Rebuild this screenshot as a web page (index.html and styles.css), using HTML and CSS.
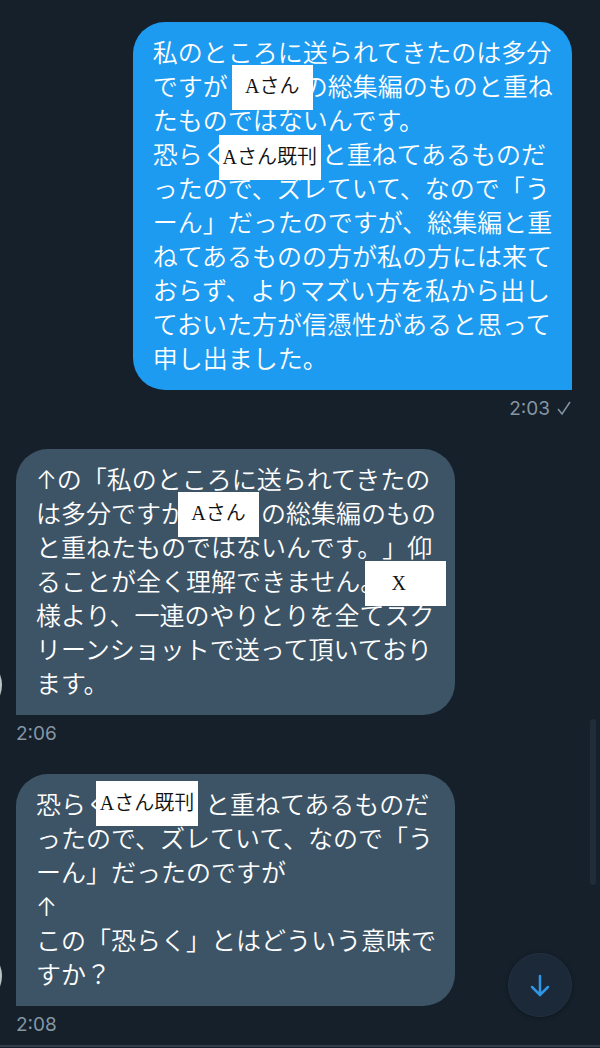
FILE: index.html
```
<!DOCTYPE html>
<html lang="ja">
<head>
    <meta charset="UTF-8">
    <meta name="viewport" content="width=device-width, initial-scale=1.0">
    <title>メッセージ</title>
    <link rel="stylesheet" href="styles.css">
</head>
<body>
    <main class="conversation">
        <div class="message outgoing">
            <p class="bubble">私のところに送られてきたのは多分ですが<span class="gap"><span class="label">Aさん</span></span>の総集編のものと重ねたものではないんです。<br>恐らく<span class="gap gap-long"><span class="label label-long">Aさん既刊</span></span>と重ねてあるものだったので、ズレていて、なので「うーん」だったのですが、総集編と重ねてあるものの方が私の方には来ておらず、よりマズい方を私から出しておいた方が信憑性があると思って申し出ました。</p>
            <div class="meta">
                <time>2:03</time>
                <svg class="check" viewBox="0 0 16 16" aria-hidden="true"><path d="M2 9l4 5L14 2"/></svg>
            </div>
        </div>

        <div class="message incoming">
            <span class="avatar"></span>
            <p class="bubble">↑の「私のところに送られてきたのは多分ですが<span class="gap"><span class="label label-left">Aさん</span></span>の総集編のものと重ねたものではないんです。」仰ることが全く理解できません。<span class="gap gap-short"><span class="label label-end">X</span></span>様より、一連のやりとりを全てスクリーンショットで送って頂いております。</p>
            <div class="meta"><time>2:06</time></div>
        </div>

        <div class="message incoming">
            <span class="avatar"></span>
            <p class="bubble">恐らく<span class="gap gap-long"><span class="label label-long label-high">Aさん既刊</span></span>と重ねてあるものだったので、ズレていて、なので「うーん」だったのですが<br>↑<br>この「恐らく」とはどういう意味ですか？</p>
            <div class="meta"><time>2:08</time></div>
        </div>
    </main>

    <span class="scroll-thumb"></span>
    <button class="scroll-down" type="button" aria-label="最新のメッセージへ">
        <svg viewBox="0 0 24 24" aria-hidden="true"><path d="M12 3v19M4 14l8 8 8-8"/></svg>
    </button>
</body>
</html>
```
FILE: styles.css
```
body {
    margin: 0;
    background-color: #15202b;
    color: #fff;
    font-family: Inter, "Noto Sans CJK JP", sans-serif;
}

.conversation {
    padding: 22px 28px 3px 16px;
    border-bottom: 2px solid #303c49;
    overflow: hidden;
}

.message {
    display: flex;
    flex-direction: column;
    position: relative;
    margin-bottom: 23px;
}

.message:last-child {
    margin-bottom: 0;
}

.outgoing {
    align-items: flex-end;
}

.incoming {
    align-items: flex-start;
}

.bubble {
    box-sizing: border-box;
    width: 79%;
    min-width: 438px;
    margin: 0;
    padding: 14px 18px 14px 20px;
    border-radius: 32px;
    font-size: 25px;
    font-weight: 350;
    line-height: 34px;
    line-break: anywhere;
    text-spacing-trim: space-all;
}

.outgoing .bubble {
    background-color: #1d9bf0;
    border-bottom-right-radius: 0;
}

.incoming .bubble {
    background-color: #3d5466;
    border-bottom-left-radius: 0;
}

.meta {
    display: flex;
    align-items: center;
    gap: 6px;
    height: 36px;
    color: #8596a3;
    font-size: 19px;
}

.check {
    width: 16px;
    height: 16px;
    fill: none;
    stroke: #8596a3;
    stroke-width: 1.5;
}

/* only the right edge of the avatar shows */
.avatar {
    position: absolute;
    left: -74px;
    bottom: 36px;
    width: 60px;
    height: 60px;
    border-radius: 50%;
    background-color: #b8c4c4;
}

/* names covered by a white label */
.gap {
    display: inline-block;
    position: relative;
    width: 75px;
    height: 34px;
    vertical-align: top;
}

.gap-long {
    width: 94px;
}

.gap-short {
    width: 50px;
}

.label {
    position: absolute;
    top: -5px;
    left: 4px;
    width: 81px;
    height: 45px;
    background-color: #fff;
    color: #111;
    font-family: "Liberation Serif", "Noto Sans CJK JP", serif;
    font-size: 20px;
    line-height: 42px;
    text-align: center;
    white-space: nowrap;
}

.label-long {
    top: -3px;
    left: -9px;
    width: 102px;
    line-height: 45px;
}

.label-high {
    top: -7px;
    left: -15px;
}

.label-left {
    left: -8px;
}

.label-end {
    box-sizing: border-box;
    top: -4px;
    left: -20px;
    padding-right: 14px;
    line-height: 45px;
}

.scroll-thumb {
    position: fixed;
    right: 4px;
    bottom: 163px;
    width: 6px;
    height: 166px;
    border-radius: 3px;
    background-color: #202c38;
}

.scroll-down {
    display: flex;
    align-items: center;
    justify-content: center;
    position: fixed;
    right: 28px;
    bottom: 31px;
    width: 64px;
    height: 64px;
    padding: 0;
    border: 1px solid #243140;
    border-radius: 50%;
    background-color: #1c2938;
    box-shadow: 0 1px 4px rgba(0, 0, 0, 0.3);
    cursor: pointer;
}

.scroll-down svg {
    width: 24px;
    height: 24px;
    fill: none;
    stroke: #2f97e4;
    stroke-width: 2.5;
    stroke-linecap: round;
}
```
